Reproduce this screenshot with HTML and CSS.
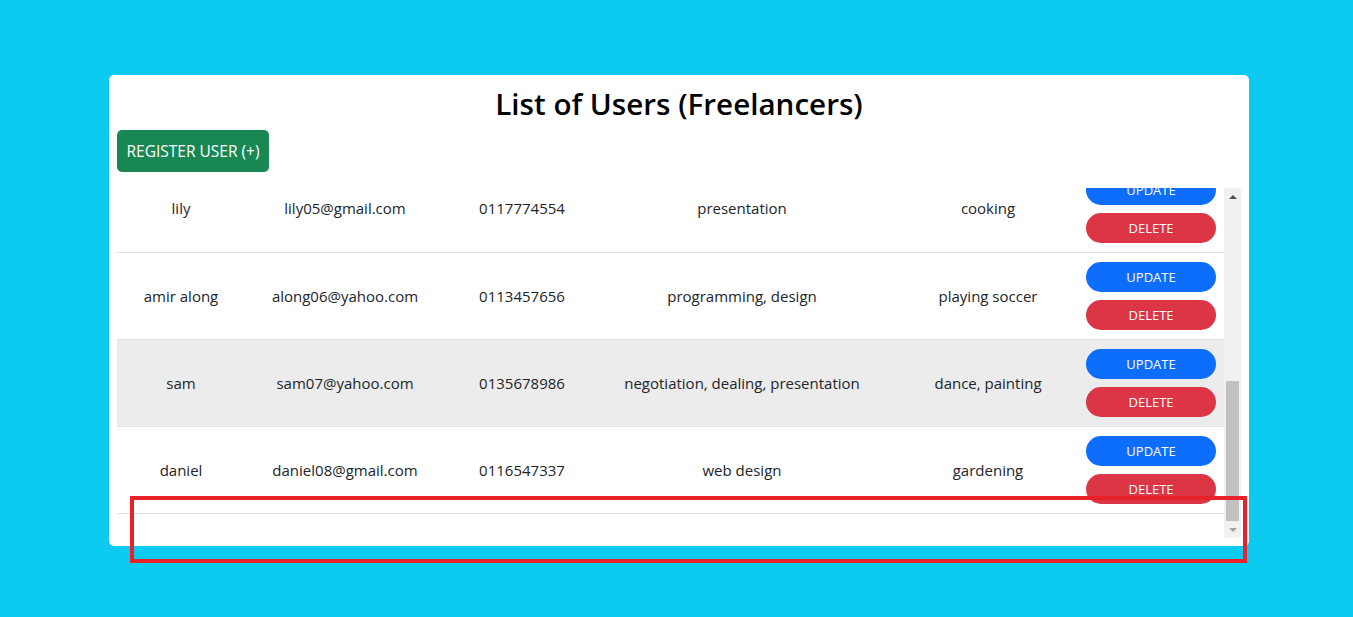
FILE: index.html
```html
<!DOCTYPE html>
<html lang="en">
<head>
<meta charset="utf-8">
<title>List of Users (Freelancers)</title>
<link rel="stylesheet" href="styles.css">
</head>
<body>
<div class="page">
  <div class="card">
    <h2 class="title">List of Users (Freelancers)</h2>
    <div class="toolbar"><button class="btn btn-register">REGISTER USER (+)</button></div>
    <div class="scroll">
      <div class="viewport">
        <table class="users">
          <colgroup>
            <col class="c1"><col class="c2"><col class="c3"><col class="c4"><col class="c5"><col class="c6">
          </colgroup>
          <tbody>
            <tr>
              <td>lily</td><td>lily05@gmail.com</td><td>0117774554</td><td>presentation</td><td class="hobby">cooking</td>
              <td class="actions"><button class="pill upd">UPDATE</button><button class="pill del">DELETE</button></td>
            </tr>
            <tr>
              <td>amir along</td><td>along06@yahoo.com</td><td>0113457656</td><td>programming, design</td><td class="hobby">playing soccer</td>
              <td class="actions"><button class="pill upd">UPDATE</button><button class="pill del">DELETE</button></td>
            </tr>
            <tr class="hover">
              <td>sam</td><td>sam07@yahoo.com</td><td>0135678986</td><td>negotiation, dealing, presentation</td><td class="hobby">dance, painting</td>
              <td class="actions"><button class="pill upd">UPDATE</button><button class="pill del">DELETE</button></td>
            </tr>
            <tr>
              <td>daniel</td><td>daniel08@gmail.com</td><td>0116547337</td><td>web design</td><td class="hobby">gardening</td>
              <td class="actions"><button class="pill upd">UPDATE</button><button class="pill del">DELETE</button></td>
            </tr>
          </tbody>
        </table>
      </div>
      <div class="scrollbar">
        <div class="arrow up"></div>
        <div class="track"><div class="thumb"></div></div>
        <div class="arrow down"></div>
      </div>
    </div>
  </div>
  <div class="annotation"></div>
</div>
</body>
</html>
```
FILE: styles.css
```css
* { box-sizing: border-box; }
html, body { margin: 0; padding: 0; }
body {
  background: #0dcaf0;
  font-family: "Open Sans", "Noto Sans", sans-serif;
  color: #212529;
  width: 1353px;
  height: 617px;
  overflow: hidden;
}
.page {
  position: relative;
  padding: 75px 104px 0 109px;
}
.card {
  width: 1140px;
  background: #fff;
  border-radius: 5px;
  padding: 8px;
}
.title {
  margin: 0;
  text-align: center;
  font-size: 29.6px;
  font-weight: 600;
  line-height: 42px;
  color: #000;
}
.toolbar { margin-top: 5px; }
.btn-register {
  background: #198754;
  color: #fff;
  border: none;
  border-radius: 5px;
  font-family: inherit;
  font-size: 15.5px;
  height: 42px;
  width: 152px;
  padding: 0;
}
.scroll {
  margin-top: 16px;
  display: flex;
  height: 350px;
}
.viewport {
  flex: 1;
  overflow: hidden;
}
.users {
  width: 1107px;
  table-layout: fixed;
  border-collapse: collapse;
  margin-top: -23px;
  font-size: 15px;
}
.c1 { width: 128px; }
.c2 { width: 200px; }
.c3 { width: 154px; }
.c4 { width: 286px; }
.c5 { width: 193px; }
.c6 { width: 146px; }
.users td {
  text-align: center;
  vertical-align: middle;
  height: 87px;
  padding: 0 8px;
  border-bottom: 1px solid #dee2e6;
  white-space: nowrap;
  line-height: 22px;
}
.users td.hobby { padding-left: 21px; }
.users tr.hover td { background: #ececec; }
.users td.actions {
  padding: 9px 8px 8px;
}
.pill {
  display: block;
  width: 130px;
  height: 30px;
  border: none;
  border-radius: 15px;
  color: #fff;
  font-family: inherit;
  font-size: 13px;
  padding: 0;
  margin: 0 auto;
}
.pill.upd { background: #0d6efd; }
.pill.del { background: #dc3545; margin-top: 8px; }
.scrollbar {
  width: 17px;
  background: #f1f1f1;
  display: flex;
  flex-direction: column;
}
.arrow {
  height: 17px;
  display: flex;
  align-items: center;
  justify-content: center;
}
.arrow::before {
  content: "";
  width: 0;
  height: 0;
  border-left: 4px solid transparent;
  border-right: 4px solid transparent;
}
.arrow.up::before { border-bottom: 4px solid #505050; }
.arrow.down::before { border-top: 4px solid #a3a3a3; }
.track {
  flex: 1;
  display: flex;
  flex-direction: column;
  justify-content: flex-end;
  padding: 0 2px;
}
.thumb {
  height: 140px;
  background: #c1c1c1;
}
.annotation {
  position: absolute;
  left: 130px;
  top: 496px;
  width: 1117px;
  height: 67px;
  border: 4px solid #e8212b;
}
```
